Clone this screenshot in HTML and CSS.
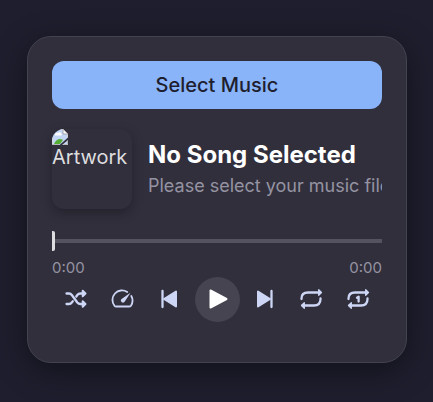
FILE: index.html
```html
<!DOCTYPE html>
<html lang="en">
<head>
<meta charset="utf-8">
<title>Music Player</title>
<link rel="stylesheet" href="styles.css">
</head>
<body>
<main class="player">
  <button class="select">Select Music</button>
  <section class="song">
    <div class="artwork">
      <svg class="missing" width="16" height="16" viewBox="0 0 16 16">
        <path d="M0 0H11L16 5V16H0Z" fill="#c3d5f5"/>
        <path d="M.5 16V.5H11L15.5 5V9" fill="none" stroke="#d5d6da"/>
        <path d="M3 6a2 2 0 0 1 3-2 2.200 2.200 0 0 1 3.500 2.500H3Z" fill="#fff"/>
        <path d="M2 15C4 10 8 9 11 11L8 15Z" fill="#55ad35"/>
        <path d="M11 0V5H16Z" fill="#f7f7f7" stroke="#98989c" stroke-width=".8"/>
        <path d="M12 0H16V4Z" fill="#312f3c"/>
        <path d="M16 8.500V11L10 16H7.500Z" fill="#312f3c"/>
        <path d="M0 15.500H7M11.500 15.500H15.500V12" fill="none" stroke="#b4b5b4"/>
      </svg>
      <span class="alt">Artwork</span>
    </div>
    <div class="info">
      <h1 class="title">No Song Selected</h1>
      <p class="artist">Please select your music files</p>
    </div>
  </section>
  <div class="progress"><span class="thumb"></span></div>
  <div class="times"><span>0:00</span><span>0:00</span></div>
  <nav class="controls">
    <button class="control" aria-label="Shuffle"><svg class="icon line" viewBox="0 0 24 24">
      <path d="M2.500 6.500H5Q6.700 6.500 7.800 8L13.300 15.500Q14.500 17 16.500 17H20M2.500 17H5Q6.700 17 7.800 15.500L8.800 14.200M12.300 9.500L13.300 8Q14.500 6.500 16.500 6.500H20"/>
      <path class="fill" d="M18.700 3.800L21.500 6.500L18.700 9.200ZM18.700 14.300L21.500 17L18.700 19.700Z"/></svg></button>
    <button class="control" aria-label="Speed"><svg class="icon line thin" viewBox="0 0 24 24">
      <path d="M16.200 5A9.500 9.500 0 0 0 3.500 18.800Q4.200 19.500 5.300 19.500H18Q19.200 19.500 19.900 18.800A9.500 9.500 0 0 0 20.300 9"/>
      <path class="solid" d="M19.500 5.700L13.800 14.600A2.100 2.100 0 0 1 10.200 12.200Z"/></svg></button>
    <button class="control" aria-label="Previous"><svg class="icon line" viewBox="0 0 24 24">
      <path d="M4.500 4V20"/><path class="fill" d="M18 4.500V19.500L6 12Z"/></svg></button>
    <button class="control play" aria-label="Play"><svg class="icon line" viewBox="0 0 24 24">
      <path class="fill" d="M4.500 3.500V20.500L20.500 12Z"/></svg></button>
    <button class="control" aria-label="Next"><svg class="icon line" viewBox="0 0 24 24">
      <path d="M19.500 4V20"/><path class="fill" d="M6 4.500V19.500L18 12Z"/></svg></button>
    <button class="control" aria-label="Repeat"><svg class="icon line" viewBox="0 0 24 24">
      <path d="M2.500 12V11.500Q2.500 5.500 9 5.500H21M21.500 11.500V12Q21.500 18.500 15 18.500H3.500"/>
      <path class="fill small" d="M19.700 2.700L22.500 5.500L19.700 8.300ZM5.300 15.700L2.500 18.500L5.300 21.300Z"/></svg></button>
    <button class="control" aria-label="Repeat one"><svg class="icon line" viewBox="0 0 24 24">
      <path d="M2.500 12V11.500Q2.500 5.500 9 5.500H21M21.500 11.500V12Q21.500 18.500 15 18.500H3.500M11 10.700L12.600 9.700V14.500"/>
      <path class="fill small" d="M19.700 2.700L22.500 5.500L19.700 8.300ZM5.300 15.700L2.500 18.500L5.300 21.300Z"/></svg></button>
  </nav>
</main>
</body>
</html>
```
FILE: styles.css
```css
* { box-sizing: border-box; }
body {
  margin: 0;
  height: 402px;
  overflow: hidden;
  padding: 36px 26px 0 27px;
  background: #1e1e2e;
  color: #dddddf;
  font-family: Inter, sans-serif;
}
button { border: 0; padding: 0; font-family: inherit; }
.player {
  height: 327px;
  padding: 24px;
  border: 1px solid #43424f;
  border-radius: 24px;
  background: #312f3c;
  box-shadow: 0 8px 32px rgba(0, 0, 0, .4);
}
.select {
  display: block;
  width: 100%;
  height: 48px;
  border-radius: 12px;
  background: #89b4fa;
  color: #1e1e2e;
  font-size: 20px;
  font-weight: 500;
}
.song { display: flex; align-items: center; gap: 16px; margin-top: 20px; }
.artwork {
  flex: none;
  width: 80px;
  height: 80px;
  overflow: hidden;
  border-radius: 12px;
  background: #312f3c;
  box-shadow: 0 4px 12px rgba(0, 0, 0, .3);
}
.missing { display: block; }
.alt { display: block; font-size: 20px; line-height: 24px; }
.info { flex: 1; min-width: 0; padding-bottom: 2px; overflow: hidden; white-space: nowrap; }
.title { margin: 0 0 6px; color: #fff; font-size: 24px; line-height: 29px; font-weight: 700; }
.artist { margin: 0; color: #9593a2; font-size: 18px; line-height: 22px; }
.progress { display: flex; align-items: center; height: 4px; margin-top: 30px; background: #54535f; }
.thumb { flex: none; width: 3px; height: 20px; border-radius: 0 2px 2px 0; background: #dddddf; }
.times {
  display: flex;
  justify-content: space-between;
  margin-top: 16px;
  color: #9593a2;
  font-size: 15px;
  line-height: 18px;
}
.controls { display: flex; justify-content: space-between; padding: 0 1px; }
.control {
  display: grid;
  place-items: center;
  width: 45px;
  height: 45px;
  padding-bottom: 1px;
  border-radius: 50%;
  background: transparent;
  color: #cdd6f4;
}
.play { margin: 0 -1px 0 1px; background: #454450; color: #fff; }
.icon { width: 24px; height: 24px; }
.line { fill: none; stroke: currentColor; stroke-width: 2.3; stroke-linecap: round; stroke-linejoin: round; }
.line.thin { stroke-width: 1.8; }
.fill { fill: currentColor; stroke-width: 2; }
.fill.small { stroke-width: 1.3; }
.solid { fill: currentColor; stroke: none; }
```
